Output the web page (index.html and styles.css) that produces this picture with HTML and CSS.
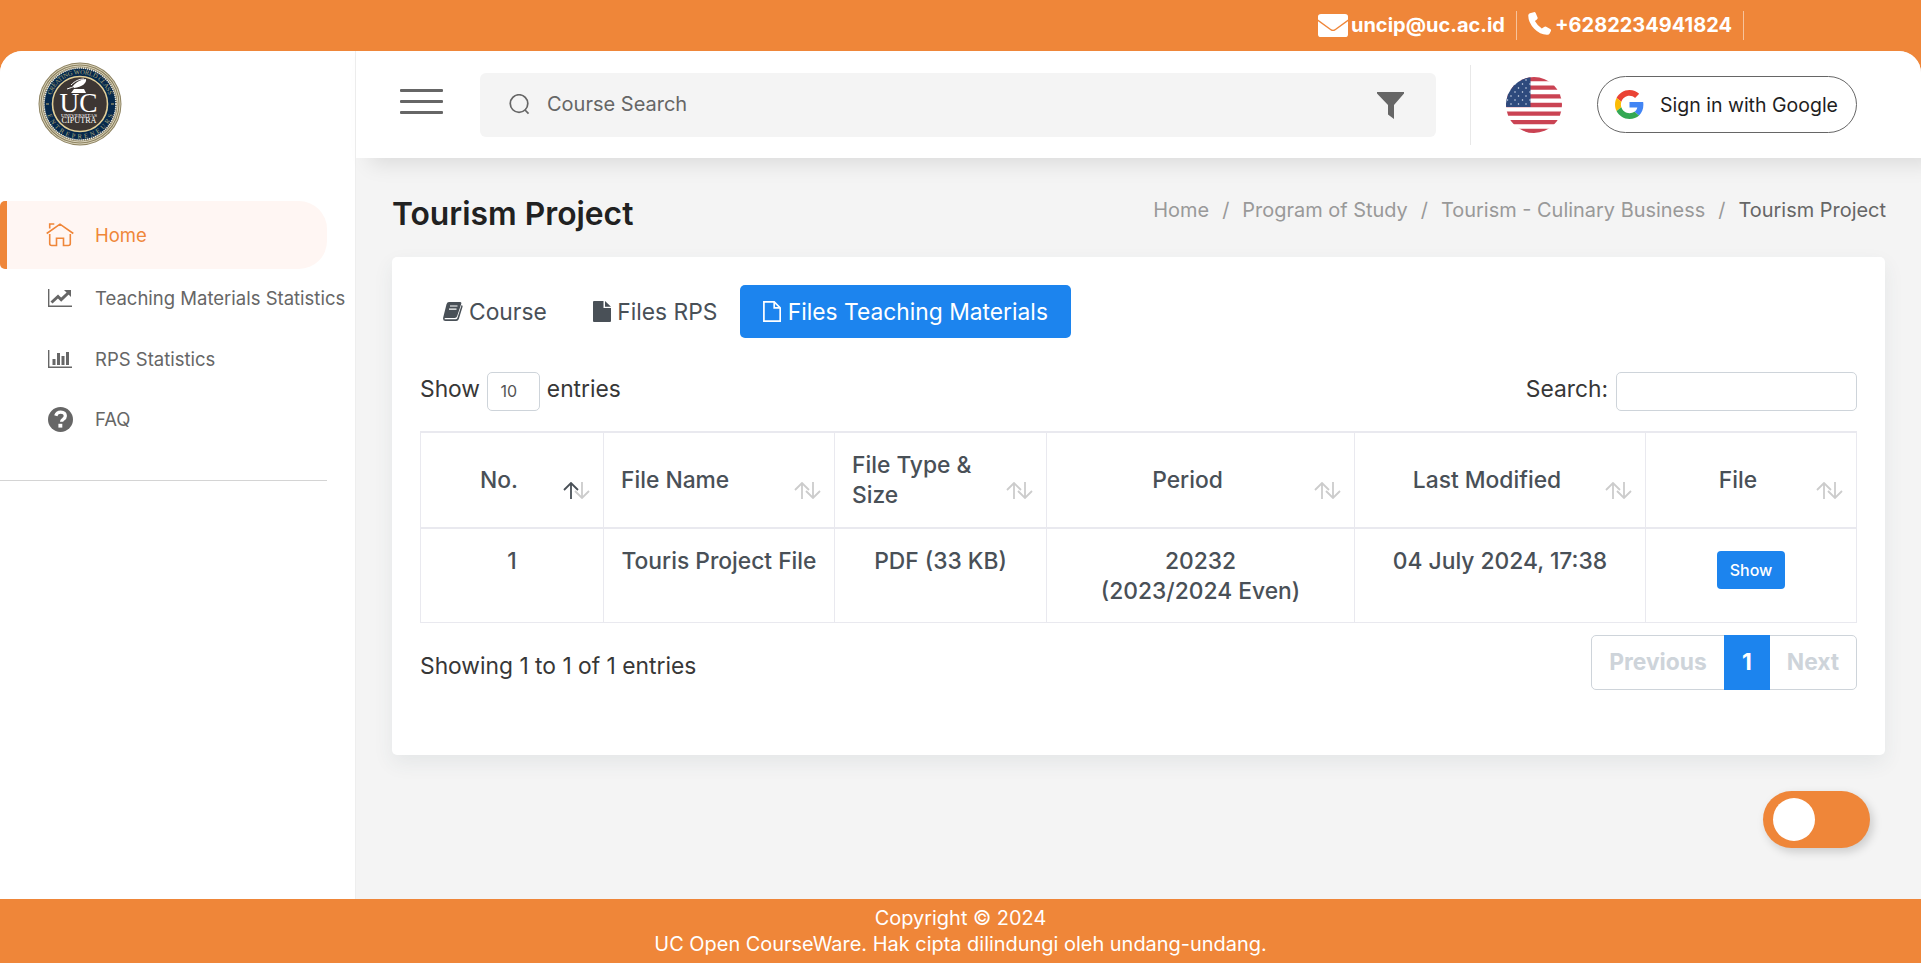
FILE: index.html
```html
<!DOCTYPE html>
<html lang="en">
<head>
<meta charset="utf-8">
<title>UC Open CourseWare</title>
<link rel="stylesheet" href="styles.css">
</head>
<body>
<div class="contact-bar">
  <span class="contact"><svg class="mail" viewBox="0 0 30 27" preserveAspectRatio="none"><path fill="#fff" d="M3 0h24q3 0 3 3v3.500L17 17.500q-2 1.700-4 0L0 6.500V3q0-3 3-3z"/><path fill="#fff" d="M0 8.500l12.500 10.500q2.500 2 5 0L30 8.500V24q0 3-3 3H3q-3 0-3-3z"/></svg>uncip@uc.ac.id</span>
  <span class="contact second"><svg class="phone" viewBox="0 0 24 27" preserveAspectRatio="none"><path fill="#fff" d="M2 1.500L6 .200q1.400-.300 2 1L10 6.500q.400 1.300-.700 2.200L7.200 10.600Q9.700 16 14.400 19.300l2.400-1.800q1-.8 2.200-.1l4.200 2.700q1.100.9.700 2.200l-1.300 3q-.7 1.400-2.200 1.500Q13 27.300 6.500 19.800 0 12 .300 3.800.500 2 2 1.500z"/></svg>+6282234941824</span>
</div>
<div class="page">
  <aside class="sidebar">
    <div class="brand">
      <svg class="logo" viewBox="0 0 84 84">
        <defs><path id="arcTop" d="M12 42a30 30 0 0 1 60 0"/><path id="arcBottom" d="M7.500 42a34.500 34.500 0 0 0 69 0"/></defs>
        <circle cx="42" cy="42" r="41.500" fill="#8d8260"/>
        <circle cx="42" cy="42" r="40" fill="none" stroke="#eee8d3" stroke-width=".8"/>
        <circle cx="42" cy="42" r="38" fill="none" stroke="#eee8d3" stroke-width=".8"/>
        <circle cx="42" cy="42" r="36" fill="#06294c" stroke="#e8e8e0" stroke-width="1.600" stroke-dasharray="1.300 .8"/>
        <circle cx="42" cy="42" r="27.500" fill="#3d3633" stroke="#e2cf98" stroke-width="1.600"/>
        <g class="ring-text"><text><textPath href="#arcTop" startOffset="50%" text-anchor="middle" textLength="76">CREATING WORLD CLASS</textPath></text><text><textPath href="#arcBottom" startOffset="50%" text-anchor="middle" textLength="86">ENTREPRENEURS</textPath></text></g>
        <path d="M8 42h3M73 42h3" stroke="#c5b57b"/>
        <path d="M33 31l3-4h10l2 4zM36 26c8-1 13-5 12-9-4 0-10 3-13 7" fill="#fff"/><path d="M29 27c6-2 12-4 16-8M33 23c4-4 8-6 13-6" stroke="#fff" fill="none"/>
        <text class="logo-uc" x="40.500" y="50.300" text-anchor="middle" textLength="38" lengthAdjust="spacingAndGlyphs">UC</text>
        <text class="logo-small" x="41" y="54.900" text-anchor="middle" textLength="36" lengthAdjust="spacingAndGlyphs">UNIVERSITAS</text>
        <text class="logo-city" x="41" y="61" text-anchor="middle" textLength="35" lengthAdjust="spacingAndGlyphs">CIPUTRA</text>
      </svg>
    </div>
    <nav class="nav">
      <a class="nav-item active"><svg class="i-home" viewBox="0 0 28 24" fill="none" stroke="#ef8639" stroke-width="1.600"><path d="M.7 10.500L14 1.200l13.300 9.300M3.700 5.500V1h4.600M3.700 11v9.500q0 2 2 2h4.800V15.200h7v7.300h4.800q2 0 2-2V11"/></svg>Home</a>
      <a class="nav-item"><svg class="i-chart" viewBox="0 0 24 18"><path d="M.7 0v17.300H24" fill="none" stroke="#666" stroke-width="1.400"/><path d="M3.500 13.500l6.500-6 3.200 3.200 7-6.700" fill="none" stroke="#666" stroke-width="3"/><path d="M16 1h7v7z" fill="#666"/></svg>Teaching Materials Statistics</a>
      <a class="nav-item"><svg class="i-chart" viewBox="0 0 24 18"><path d="M.7 0v17.300H24" fill="none" stroke="#666" stroke-width="1.400"/><path d="M4.500 9h3v6h-3zM9 3h3v12H9zM13.500 6h3v9h-3zM18 2h3v13h-3z" fill="#666"/></svg>RPS Statistics</a>
      <a class="nav-item"><svg class="i-faq" viewBox="0 0 25 25"><circle cx="12.500" cy="12.500" r="12.500" fill="#666"/><path d="M7.800 8.800q1-3.700 4.900-3.700 4.600.1 4.600 3.900 0 2-2.200 3.400-1.500.9-1.500 2.400" fill="none" stroke="#fff" stroke-width="3.300"/><path d="M10.400 16.800h3.900v3.800h-3.900z" fill="#fff"/></svg>FAQ</a>
    </nav>
    <div class="rule"></div>
  </aside>
  <div class="main">
    <header class="topbar">
      <div class="burger"><i></i><i></i><i></i></div>
      <div class="searchbox"><svg class="i-search" viewBox="0 0 22 22" fill="none" stroke="#666" stroke-width="1.800"><circle cx="10.500" cy="10" r="9.200"/><path d="M16.500 16.500l4 4"/></svg><span>Course Search</span><svg class="i-filter" viewBox="0 0 27 27"><path fill="#666" d="M0 0h27v1.500L17 13v14l-6-4.500V13L0 1.500z"/></svg></div>
      <div class="divider"></div>
      <svg class="flag" viewBox="0 0 56 56"><defs><clipPath id="round"><circle cx="28" cy="28" r="28"/></clipPath></defs><g clip-path="url(#round)"><path fill="#fff" d="M0 0h56v56H0z"/><path stroke="#ca4353" stroke-width="4.300" d="M0 2h56M0 10.700h56M0 19.300h56M0 28h56M0 36.600h56M0 45.200h56M0 54h56"/><path fill="#2e4a7d" d="M0 0h24.500v30H0z"/><path stroke="#dfe6f2" stroke-width="1.500" stroke-linecap="round" stroke-dasharray="0 7.500" d="M5 3h20M1.500 7h23M5 11h20M1.500 15h23M5 19h20M1.500 23h23M5 27h20"/></g></svg>
      <button class="signin"><svg class="google" viewBox="0 0 48 48"><path fill="#EA4335" d="M24 9.500c3.540 0 6.710 1.220 9.210 3.600l6.850-6.850C35.900 2.380 30.470 0 24 0 14.620 0 6.510 5.380 2.560 13.220l7.980 6.190C12.430 13.720 17.740 9.500 24 9.500z"/><path fill="#4285F4" d="M46.980 24.550c0-1.570-.15-3.090-.38-4.550H24v9.020h12.940c-.58 2.960-2.260 5.480-4.780 7.180l7.730 6c4.510-4.180 7.090-10.360 7.090-17.650z"/><path fill="#FBBC05" d="M10.530 28.590c-.48-1.450-.76-2.990-.76-4.590s.27-3.140.76-4.590l-7.980-6.190C.92 16.460 0 20.120 0 24c0 3.880.92 7.540 2.560 10.780l7.970-6.190z"/><path fill="#34A853" d="M24 48c6.480 0 11.930-2.130 15.890-5.810l-7.730-6c-2.150 1.450-4.920 2.300-8.160 2.300-6.260 0-11.570-4.220-13.470-9.910l-7.980 6.190C6.510 42.620 14.620 48 24 48z"/></svg>Sign in with Google</button>
    </header>
    <div class="heading">
      <h1>Tourism Project</h1>
      <div class="crumbs"><span>Home</span><i>/</i><span>Program of Study</span><i>/</i><span>Tourism - Culinary Business</span><i>/</i><b>Tourism Project</b></div>
    </div>
    <section class="card">
      <div class="tabs">
        <a class="tab"><svg class="i-book" viewBox="0 0 20 19"><path fill="#495057" d="M6 0h11q1.800 0 1.200 2l-4 12q-.6 2-2.500 2H2.500q-1 0-1 .7 0 .6 1 .6h10.200q1.200 0 1.700-1.300L18.600 3q1.300.5.900 2L15.800 17q-.6 2-2.600 2H2.500Q-.5 19 .2 15.500L3.500 2.300Q4.200 0 6 0z"/><path d="M7 4h7.500M6 7.200h7.500" stroke="#fff" stroke-width="1.200"/></svg>Course</a>
        <a class="tab"><svg class="i-file" viewBox="0 0 18 21"><path fill="#495057" d="M0 1q0-1 1-1h9.500v7H18v13q0 1-1 1H1q-1 0-1-1zM12 0l6 5.700h-6z"/></svg>Files RPS</a>
        <a class="tab active"><svg class="i-file" viewBox="0 0 18 21" fill="none" stroke="#fff" stroke-width="1.700"><path d="M.9.9h10.300l6 6v13.200H.9zM11.200.9v6h6"/></svg>Files Teaching Materials</a>
      </div>
      <div class="controls"><label>Show <span class="select">10</span> entries</label><label>Search:<input type="text"></label></div>
      <table class="grid">
        <colgroup><col class="c1"><col class="c2"><col class="c3"><col class="c4"><col class="c5"><col class="c6"></colgroup>
        <thead><tr>
          <th class="mid">No.<svg class="sort" viewBox="0 0 27 17" fill="none" stroke-width="1.800"><path stroke="#495057" d="M8 17V1M1 8l7-7 7 7"/><path stroke="#ccc" d="M19 0v16M12 9l7 7 7-7"/></svg></th>
          <th>File Name<svg class="sort" viewBox="0 0 27 17" fill="none" stroke="#ccc" stroke-width="1.800"><path d="M8 17V1M1 8l7-7 7 7M19 0v16M12 9l7 7 7-7"/></svg></th>
          <th>File Type &amp; Size<svg class="sort" viewBox="0 0 27 17" fill="none" stroke="#ccc" stroke-width="1.800"><path d="M8 17V1M1 8l7-7 7 7M19 0v16M12 9l7 7 7-7"/></svg></th>
          <th class="mid">Period<svg class="sort" viewBox="0 0 27 17" fill="none" stroke="#ccc" stroke-width="1.800"><path d="M8 17V1M1 8l7-7 7 7M19 0v16M12 9l7 7 7-7"/></svg></th>
          <th class="mid">Last Modified<svg class="sort" viewBox="0 0 27 17" fill="none" stroke="#ccc" stroke-width="1.800"><path d="M8 17V1M1 8l7-7 7 7M19 0v16M12 9l7 7 7-7"/></svg></th>
          <th class="mid">File<svg class="sort" viewBox="0 0 27 17" fill="none" stroke="#ccc" stroke-width="1.800"><path d="M8 17V1M1 8l7-7 7 7M19 0v16M12 9l7 7 7-7"/></svg></th>
        </tr></thead>
        <tbody><tr><td>1</td><td class="name">Touris Project File</td><td>PDF (33 KB)</td><td>20232<br>(2023/2024 Even)</td><td>04 July 2024, 17:38</td><td><button class="show">Show</button></td></tr></tbody>
      </table>
      <div class="bottom"><span class="info">Showing 1 to 1 of 1 entries</span><div class="pager"><span class="prev">Previous</span><span class="current">1</span><span class="next">Next</span></div></div>
    </section>
    <div class="toggle"><i></i></div>
  </div>
</div>
<footer class="footer">Copyright © 2024<br>UC Open CourseWare. Hak cipta dilindungi oleh undang-undang.</footer>
</body>
</html>
```
FILE: styles.css
```css
* { box-sizing: border-box; }
body { margin: 0; width: 1921px; height: 963px; overflow: hidden; background: #ef8639; font-family: Inter, sans-serif; font-size: 22.800px; color: #373737; display: flex; flex-direction: column; }
svg { display: block; flex: none; }
i { font-style: normal; }

.contact-bar { height: 51px; flex: none; display: flex; align-items: flex-start; padding: 11px 177px 0 0; justify-content: flex-end; color: #fff; font-weight: 700; font-size: 20px; }
.contact { display: flex; align-items: center; height: 29px; border-right: 1px solid rgba(255,255,255,.5); padding: 0 11px 2px 0; }
.second { padding-left: 11px; }
.mail { width: 30px; height: 23px; margin: 2px 3px 0 0; }
.phone { width: 23px; height: 23px; margin: -2px 4px 0 0; }

.page { height: 848px; flex: none; display: flex; background: #f4f4f4; border-radius: 22px 22px 0 0; overflow: hidden; }
.sidebar { width: 356px; flex: none; background: #fff; border-right: 1px solid #eee; }
.brand { height: 150px; padding: 11px 0 0 38px; }
.logo { width: 84px; height: 84px; }
.logo text { font-family: "Liberation Serif", serif; fill: #fff; }
.logo .ring-text text { font-size: 6.500px; fill: #aaa67b; }
.logo .logo-uc { font-size: 27px; }
.logo .logo-small { font-size: 5px; }
.logo .logo-city { font-size: 7.500px; }
.nav-item { display: flex; align-items: center; height: 60.500px; padding: 0 0 2px 48px; font-size: 18.500px; color: #666; white-space: nowrap; font-weight: 400; }
.nav-item.active { height: 68px; width: 327px; padding: 0 0 0 39px; border-left: 7px solid #ef8639; border-radius: 5px 28px 28px 5px; background: #fff6f3; color: #ef8639; }
.i-home { width: 28px; height: 24px; margin-right: 21px; }
.i-chart { width: 24px; height: 18px; margin-right: 23px; }
.i-faq { width: 25px; height: 25px; margin-right: 22px; }
.rule { width: 327px; height: 1px; background: #d4d4d4; margin-top: 29px; }

.main { flex: 1; min-width: 0; }
.topbar { height: 107px; background: #fff; display: flex; align-items: center; padding-left: 44px; box-shadow: 14px 6px 20px rgba(0,0,0,.1); }
.burger { width: 43px; display: grid; gap: 8px; margin-top: -6px; }
.burger i { height: 3px; background: #666; border-radius: 1px; }
.searchbox { width: 956px; height: 64px; margin-left: 37px; background: #f4f4f4; border-radius: 6px; display: flex; align-items: center; padding: 0 32px 0 29px; font-size: 20px; color: #666; }
.searchbox span { padding-bottom: 2px; }
.i-search { width: 21px; height: 21px; margin: 0 17px 0 0; }
.i-filter { width: 27px; height: 27px; margin: 2px 0 0 auto; }
.divider { width: 1px; height: 80px; background: #e8e8e8; margin-left: 34px; }
.flag { width: 56px; height: 56px; margin-left: 35px; }
.signin { width: 260px; height: 57px; margin-left: 35px; border: 1px solid #666; border-radius: 29px; background: #fff; font: 400 19.500px Inter, sans-serif; color: #1f1f1f; display: flex; align-items: center; padding: 0 0 0 17px; white-space: nowrap; }
.google { width: 29px; height: 29px; margin-right: 16px; }

.heading { height: 99px; padding: 36px 35px 0 36px; display: flex; justify-content: space-between; }
h1 { margin: 0; font-size: 31.800px; line-height: 40px; font-weight: 600; color: #212121; }
.crumbs { font-size: 19.950px; line-height: 32px; color: #999; display: flex; white-space: nowrap; }
.crumbs i { margin: 0 13px; }
.crumbs b { font-weight: 400; color: #666; }
.card { width: 1493px; height: 498px; margin-left: 36px; background: #fff; border-radius: 5px; padding: 28px 28px 0; box-shadow: 0 8px 20px rgba(50,80,90,.08); }
.tabs { display: flex; height: 53px; }
.tab { display: flex; align-items: center; padding: 0 23px; color: #495057; white-space: nowrap; }
.tab.active { background: #1c84ee; color: #fff; border-radius: 5px; }
.i-book { width: 20px; height: 19px; margin-right: 6px; }
.i-file { width: 18px; height: 21px; margin-right: 6.500px; }
.controls { display: flex; justify-content: space-between; margin-top: 34px; height: 39px; }
.controls label { display: flex; align-items: flex-start; line-height: 34px; white-space: pre; }
.select { width: 53px; height: 39px; border: 1px solid #ced4da; border-radius: 5px; font-size: 16px; line-height: 37px; padding-left: 12px; margin-left: 1px; color: #555; }
.controls input { width: 241px; height: 39px; border: 1px solid #ced4da; border-radius: 5px; margin-left: 8px; background: #fff; }
.grid { width: 1436px; table-layout: fixed; border-collapse: collapse; margin-top: 20px; color: #495057; line-height: 30px; }
.c1 { width: 183px; } .c2 { width: 231px; } .c3 { width: 212px; } .c4 { width: 308px; } .c5 { width: 291px; } .c6 { width: 211px; }
.grid th, .grid td { border: 1px solid #e9e9ef; font-weight: 500; }
.grid th { position: relative; height: 96px; border-top-width: 2px; border-bottom-width: 2px; padding: 0 39px 0 17px; text-align: left; }
.grid th.mid { text-align: center; padding: 0 43px 0 17px; }
.sort { position: absolute; right: 13px; bottom: 28px; width: 27px; height: 17px; }
.grid td { height: 94px; padding: 17px 16px 0; text-align: center; vertical-align: top; }
.grid td.name { white-space: nowrap; padding-left: 10px; padding-right: 10px; }
.show { height: 38px; width: 68px; margin-top: 5px; padding: 0; border: 0; border-radius: 4px; background: #1c84ee; color: #fff; font: 500 16px Inter, sans-serif; }
.bottom { display: flex; justify-content: space-between; margin-top: 12px; }
.info { line-height: 62px; }
.pager { display: flex; width: 266px; height: 55px; border: 1px solid #ced4da; border-radius: 5px; font-weight: 700; color: #ced4da; line-height: 52px; }
.pager .prev { width: 132px; text-align: center; }
.pager .current { width: 46px; height: 55px; margin-top: -1px; line-height: 54px; background: #1c84ee; color: #fff; text-align: center; }
.pager .next { flex: 1; text-align: center; }
.toggle { width: 107px; height: 57px; margin: 36px 51px 0 auto; border-radius: 29px; background: #ef8639; padding: 7px 10px; box-shadow: 3px 4px 10px rgba(0,0,0,.17); }
.toggle i { display: block; width: 42px; height: 43px; border-radius: 50%; background: #fff; }
.footer { height: 64px; flex: none; text-align: center; color: #fff; font-size: 19.950px; line-height: 26px; padding-top: 6px; }
```
